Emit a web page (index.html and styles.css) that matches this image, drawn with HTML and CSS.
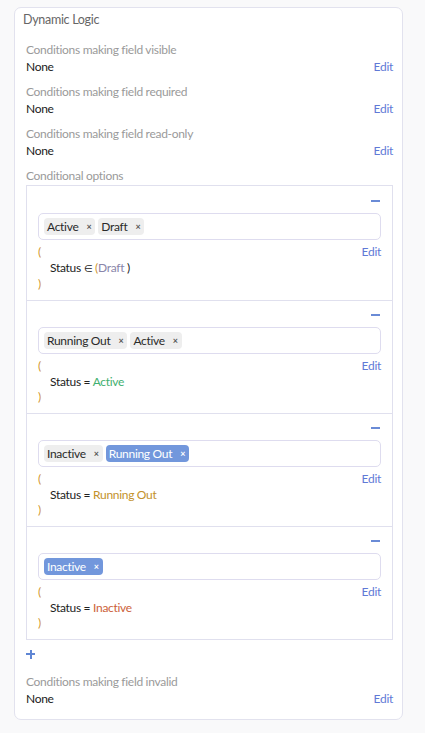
FILE: index.html
```html
<!DOCTYPE html>
<html>
<head>
<meta charset="utf-8">
<link rel="stylesheet" href="styles.css">
</head>
<body>
<div class="card">
  <div class="card-head"><span class="title">Dynamic Logic</span></div>
  <div class="card-body">
    <div class="field">
      <div class="label">Conditions making field visible</div>
      <div class="value"><span>None</span><a class="edit">Edit</a></div>
    </div>
    <div class="field">
      <div class="label">Conditions making field required</div>
      <div class="value"><span>None</span><a class="edit">Edit</a></div>
    </div>
    <div class="field">
      <div class="label">Conditions making field read-only</div>
      <div class="value"><span>None</span><a class="edit">Edit</a></div>
    </div>
    <div class="field options">
      <div class="label">Conditional options</div>
      <div class="opt-box">
        <div class="opt-item">
          <div class="opt-top"><span class="minus"></span></div>
          <div class="tag-input">
            <span class="tag">Active<span class="x">×</span></span>
            <span class="tag">Draft<span class="x">×</span></span>
          </div>
          <div class="cond">
            <div class="cond-head"><span class="paren">(</span><a class="edit">Edit</a></div>
            <div class="cond-line indent">Status <span class="elem">∈</span> <span class="paren">(</span><span class="c-draft">Draft</span> )</div>
            <div class="cond-line"><span class="paren">)</span></div>
          </div>
        </div>
        <div class="opt-item">
          <div class="opt-top"><span class="minus"></span></div>
          <div class="tag-input">
            <span class="tag">Running Out<span class="x">×</span></span>
            <span class="tag">Active<span class="x">×</span></span>
          </div>
          <div class="cond">
            <div class="cond-head"><span class="paren">(</span><a class="edit">Edit</a></div>
            <div class="cond-line indent">Status = <span class="c-active">Active</span></div>
            <div class="cond-line"><span class="paren">)</span></div>
          </div>
        </div>
        <div class="opt-item">
          <div class="opt-top"><span class="minus"></span></div>
          <div class="tag-input">
            <span class="tag">Inactive<span class="x">×</span></span>
            <span class="tag sel">Running Out<span class="x">×</span></span>
          </div>
          <div class="cond">
            <div class="cond-head"><span class="paren">(</span><a class="edit">Edit</a></div>
            <div class="cond-line indent">Status = <span class="c-running">Running Out</span></div>
            <div class="cond-line"><span class="paren">)</span></div>
          </div>
        </div>
        <div class="opt-item">
          <div class="opt-top"><span class="minus"></span></div>
          <div class="tag-input">
            <span class="tag sel">Inactive<span class="x">×</span></span>
          </div>
          <div class="cond">
            <div class="cond-head"><span class="paren">(</span><a class="edit">Edit</a></div>
            <div class="cond-line indent">Status = <span class="c-inactive">Inactive</span></div>
            <div class="cond-line"><span class="paren">)</span></div>
          </div>
        </div>
      </div>
      <div class="add-row"><span class="plus"></span></div>
    </div>
    <div class="field last">
      <div class="label">Conditions making field invalid</div>
      <div class="value"><span>None</span><a class="edit">Edit</a></div>
    </div>
  </div>
</div>
</body>
</html>
```

FILE: styles.css
```css
* { box-sizing: border-box; }
html, body { background: #f9f9fa; }
body {
  margin: 0;
  padding: 7px 0 0 14px;
  font-family: Lato, "Open Sans", sans-serif;
  font-size: 12px;
  letter-spacing: -0.3px;
  color: #222;
}
.card {
  width: 389px;
  background: #fff;
  border: 1px solid #e2e2ee;
  border-radius: 7px;
}
.card-head {
  padding: 3px 8px 0;
  height: 22px;
}
.title {
  font-size: 12.5px;
  line-height: 18px;
  color: #666;
}
.card-body {
  padding: 11px 9px 12px 11px;
}
.field { margin-bottom: 8px; }
.field.last { margin-bottom: 0; }
.label {
  color: #9a9a9a;
  line-height: 17px;
}
.value {
  display: flex;
  justify-content: space-between;
  line-height: 17px;
  color: #1a1a1a;
}
.edit {
  color: #6079d6;
  cursor: pointer;
}
.options .label { margin-bottom: 1px; }
.opt-box {
  border: 1px solid #e0e0ee;
}
.opt-item {
  padding: 6px 11px 8.5px 11px;
  border-top: 1px solid #e0e0ee;
}
.opt-item:first-child { border-top: none; padding-top: 7px; }
.opt-top {
  height: 16px;
  display: flex;
  justify-content: flex-end;
  align-items: center;
  padding-right: 1px;
}
.minus {
  width: 9px;
  height: 2px;
  background: #6a8bd6;
}
.tag-input {
  margin-top: 4px;
  height: 27px;
  border: 1px solid #dedcef;
  border-radius: 5px;
  padding: 4px 5px;
  display: flex;
  gap: 3px;
  align-items: center;
}
.tag {
  height: 17px;
  display: inline-flex;
  align-items: center;
  padding: 0 4px 0 3px;
  border-radius: 4px;
  background: #eeeeee;
  color: #2a2a2a;
  line-height: 17px;
}
.tag .x {
  font-size: 9px;
  font-weight: bold;
  margin-left: 8px;
  color: #555;
}
.tag.sel {
  background: #7297dc;
  color: #fff;
}
.tag.sel .x { color: #fff; }
.cond {
  margin-top: 4px;
}
.cond-head {
  display: flex;
  justify-content: space-between;
  line-height: 15.5px;
}
.cond-line {
  line-height: 15.5px;
  white-space: pre;
}
.indent { padding-left: 12px; }
.elem { font-size: 10px; }
.paren { color: #cf9530; }
.c-draft { color: #8a86aa; }
.c-active { color: #3fb070; }
.c-running { color: #c3912b; }
.c-inactive { color: #cc5f3a; }
.add-row {
  margin-top: 6px;
  height: 16px;
  display: flex;
  align-items: center;
  margin-bottom: 11px;
}
.plus {
  position: relative;
  width: 9px;
  height: 9px;
}
.plus::before, .plus::after {
  content: "";
  position: absolute;
  background: #5f86d4;
}
.plus::before { left: 0; top: 3.5px; width: 9px; height: 2px; }
.plus::after { left: 3.5px; top: 0; width: 2px; height: 9px; }
```
